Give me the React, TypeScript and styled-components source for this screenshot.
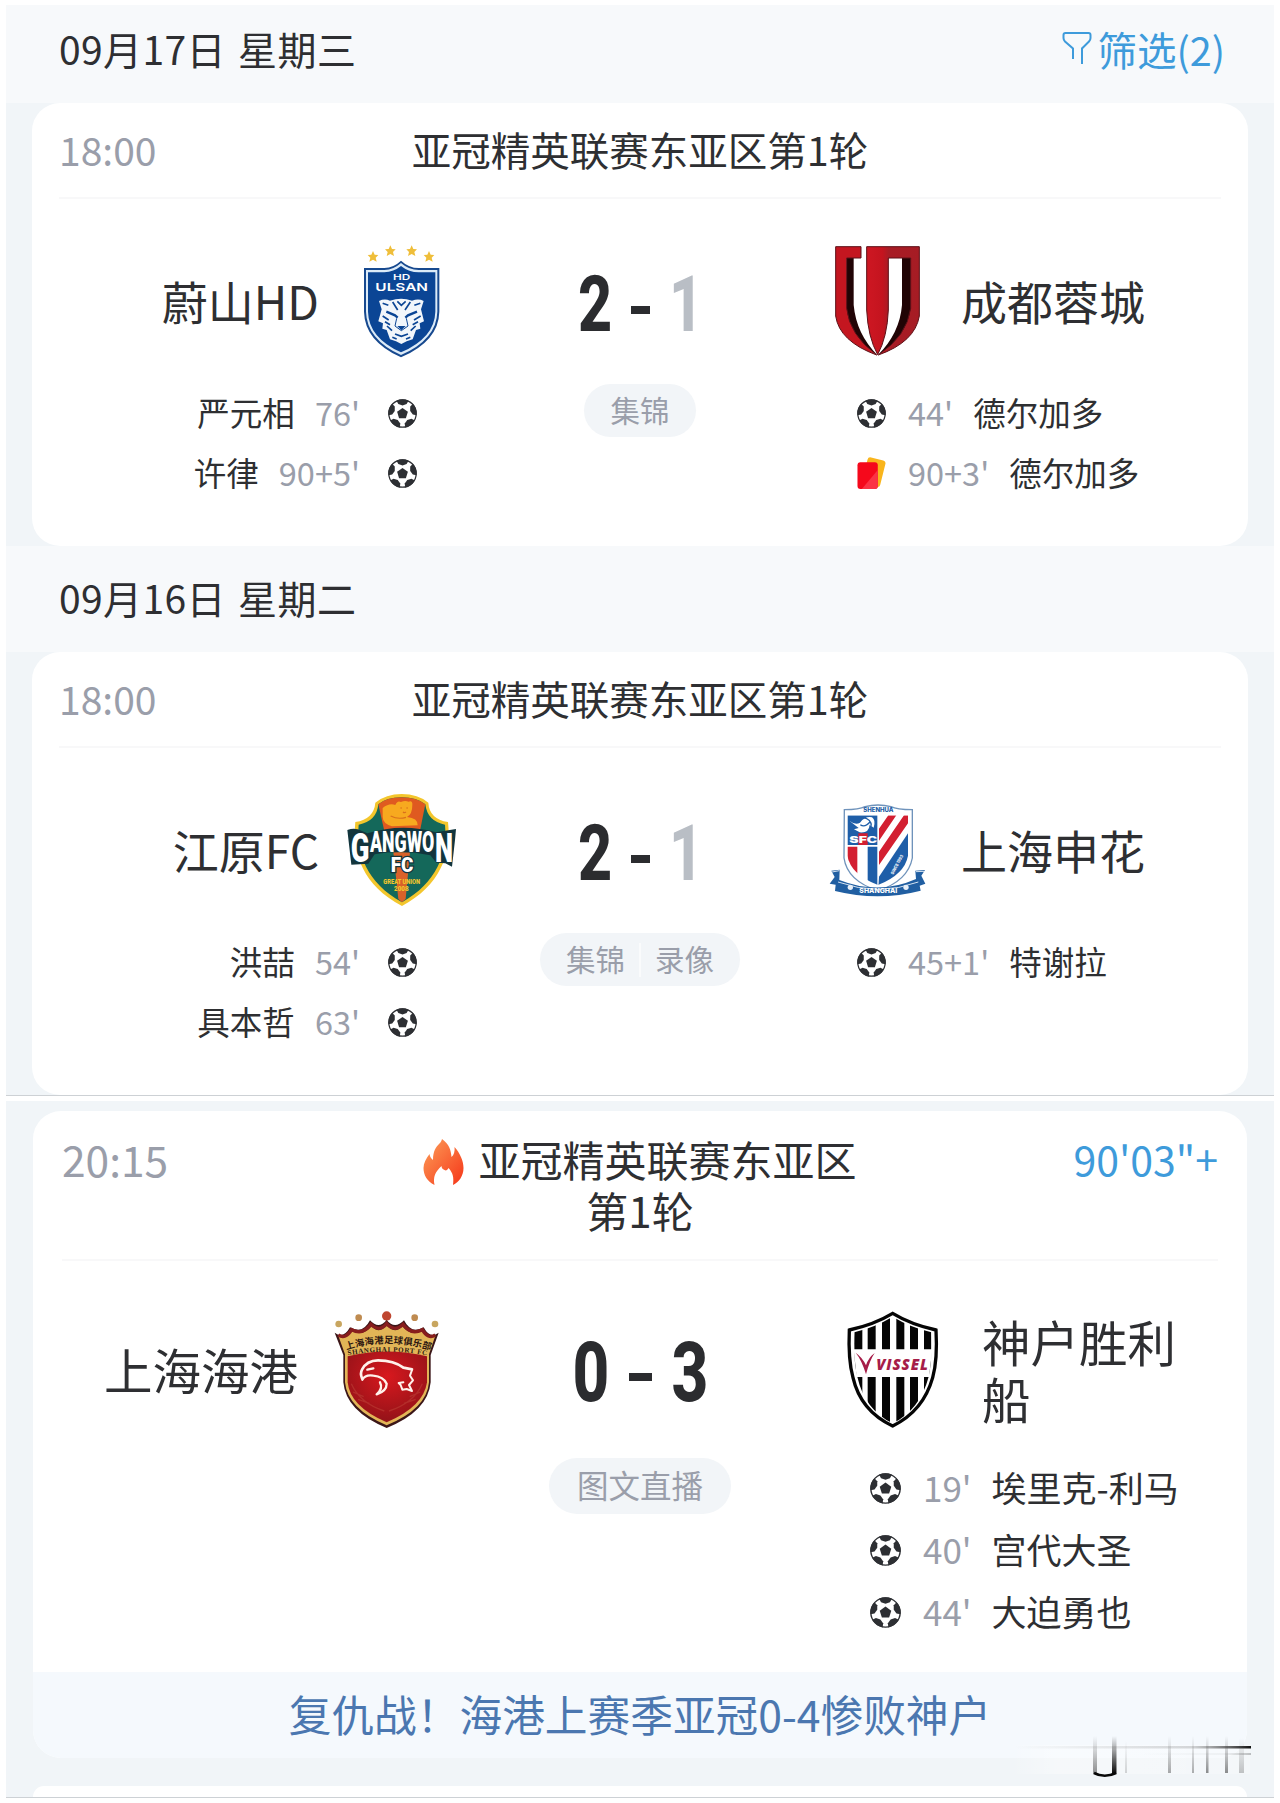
import { ReactNode } from "react";
import styled, { createGlobalStyle } from "styled-components";

const GlobalStyle = createGlobalStyle`
  * {
    box-sizing: border-box;
  }
  body {
    margin: 0;
    background: #fff;
    font-family: "Noto Sans CJK SC", sans-serif;
    color: #2e2f32;
  }
`;

type MatchEvent = { type: "goal" | "red"; time: string; player: string };

type Team = { name: string; crest: ReactNode; events: MatchEvent[] };

type Match = {
  time: string;
  title: string;
  home: Team;
  away: Team;
  score: [number, number];
  tags: string[];
};

const Ball = ({ size }: { size: number }) => (
  <svg width={size} height={size} viewBox="0 0 30 30">
    <circle cx="15" cy="15" r="14.2" fill="#fff" stroke="#2d2f33" strokeWidth="1.3" />
    {[0, 72, 144, 216, 288].map((angle) => (
      <path
        key={angle}
        transform={`rotate(${angle} 15 15)`}
        d="M8.800 1.700Q15 -1 21.200 1.700L19.300 5.200 15 6.600 10.700 5.200Z"
        fill="#2d2f33"
      />
    ))}
    <path d="M15 9.200 20.600 13.200 18.500 19.900H11.500L9.400 13.200Z" fill="#2d2f33" />
  </svg>
);

const RedCard = () => (
  <svg width="30" height="34" viewBox="0 0 30 34">
    <rect
      x="8"
      y="2"
      width="19"
      height="28"
      rx="3"
      fill="#f9b51c"
      transform="rotate(14 17 16)"
    />
    <rect x="0.5" y="6" width="21" height="27.5" rx="3" fill="#f5081b" />
    <path d="M21.5 14V30.5a3 3 0 0 1-3 3H5Z" fill="#fb3345" />
  </svg>
);

const Funnel = () => (
  <svg width="30" height="34" viewBox="0 0 30 34">
    <path
      d="M11 28V17.5L3 10.5Q1.5 9 1.5 7V4Q1.5 2 3.5 2H26.500Q28.500 2 28.500 4V7Q28.500 9 27 10.500L20 17.500V33"
      fill="none"
      stroke="#3e9bdb"
      strokeWidth="2"
    />
  </svg>
);

const Flame = () => (
  <svg width="41" height="46" viewBox="0 0 41 46">
    <defs>
      <linearGradient id="flame" x1="0" y1="0" x2="1" y2="1">
        <stop offset="0.2" stopColor="#fb8a4c" />
        <stop offset="0.9" stopColor="#f6401f" />
      </linearGradient>
    </defs>
    <path
      d="M19 0C26 5 28 11 28.500 18C31 16 32 12 31.500 8C37 14 40.500 22 40.500 29C40.500 37 36 43 30 46C31 38 30 34 25.500 29C24.500 31 23 32 21.500 31C19.500 30 18.500 29 18.500 27C12 33 10 38 11.500 46C4 42 0.500 36 0.500 29C0.500 24 3 20 6.500 15C7 18 8 19.500 10 21C10 12 13 8 16 5C18 3 18.500 2 19 0Z"
      fill="url(#flame)"
    />
  </svg>
);

const UlsanCrest = () => (
  <svg width="110" height="112" viewBox="21 48 330 336" overflow="visible">
    {[
      [99, 80],
      [151, 63],
      [215, 63],
      [267, 80],
    ].map(([x, y]) => (
      <path
        key={x}
        transform={`translate(${x} ${y})`}
        d="M0-17 5-6 16-5 8 3 11 15 0 9-11 15-8 3-16-5-5-6Z"
        fill="#efbe3a"
      />
    ))}
    <path
      d="M183 92Q207 114 236 114H298V245Q296 333 183 382Q74 333 72 245V114H133Q161 113 183 92Z"
      fill="#17498f"
    />
    <path
      d="M183 99Q207 120 236 120H292V245Q290 328 183 375Q80 328 78 245V120H133Q161 119 183 99Z"
      fill="#dcebf8"
    />
    <path
      d="M183 108Q207 127 236 127H286V245Q284 323 183 367Q86 323 84 245V127H133Q161 126 183 108Z"
      fill="#0b4595"
    />
    <text textAnchor="middle" fontFamily="Inter" fontWeight="600" fill="#fff">
      <tspan
        x="185"
        y="151"
        fontSize="24"
        textLength="52"
        lengthAdjust="spacingAndGlyphs"
      >
        HD
      </tspan>
      <tspan
        x="185"
        y="184"
        fontSize="33"
        textLength="158"
        lengthAdjust="spacingAndGlyphs"
      >
        ULSAN
      </tspan>
    </text>
    <path
      d="M117 213Q134 205 150 212Q184 200 216 212Q236 205 251 213L243 238L252 274L239 280L241 296L228 300L218 328L200 334L184 342L168 334L150 328L140 300L127 296L129 280L115 274L125 238Z"
      fill="#f2f6fb"
    />
    <g fill="none" stroke="#0b4595" strokeWidth="5">
      <path d="M128 220 145 226 M241 220 223 226 M172 214 184 226 197 214 M158 216 173 240 M211 216 195 240" />
      <path d="M139 245 165 256 173 263 M231 245 204 256 196 263" strokeWidth="7" />
      <path d="M170 265 165 288 184 302 204 288 199 265" strokeWidth="3" />
      <path d="M128 258 146 270 M242 258 222 270 M135 275 150 284 M234 275 218 284 M141 288 156 302 M227 288 212 302" />
      <path d="M165 312 184 319 204 312 M157 322 170 327 M211 322 198 327" />
    </g>
    <path d="M172 288H197L184 301Z" fill="#0b4595" />
  </svg>
);

const ChengduCrest = () => (
  <svg width="110" height="112" viewBox="39 48 330 336" overflow="visible">
    <defs>
      <linearGradient id="chengdu" x1="0" y1="0" x2="1" y2="0">
        <stop offset="0" stopColor="#ce1722" />
        <stop offset="0.3" stopColor="#c4141f" />
        <stop offset="0.42" stopColor="#a81c25" />
        <stop offset="1" stopColor="#a61c24" />
      </linearGradient>
    </defs>
    <path
      d="M110 84H131V225Q139 312 202 375Q122 325 108 245Z M276 84H303V245Q287 325 204 375Q269 310 276 225Z"
      fill="#210405"
    />
    <path
      d="M77 50H153V84H110V235Q118 315 200 375Q88 334 77 258Z"
      fill="#c41620"
      stroke="#5d1118"
      strokeWidth="3"
    />
    <path
      d="M170 50H328V258Q315 336 205 375Q291 318 302 235V84H235V240Q232 320 203 374Q174 322 170 240Z"
      fill="url(#chengdu)"
      stroke="#5d1118"
      strokeWidth="3"
    />
  </svg>
);

const GangwonCrest = () => (
  <svg width="110" height="112" viewBox="51 43 330 336" overflow="visible">
    <path
      d="M215 40Q264 40 295 66Q298 115 354 124C365 220 330 315 216 376C100 315 66 220 76 124Q132 115 136 66Q168 40 215 40Z"
      fill="#f3c62c"
    />
    <path
      d="M215 50Q260 50 286 71Q292 122 345 132C353 218 320 306 216 365C111 306 78 218 86 132Q140 122 145 71Q170 50 215 50Z"
      fill="#14685a"
    />
    <path d="M145 71Q170 50 215 50Q260 50 286 71L268 160H165Z" fill="#df5a20" />
    <path d="M190 215H240L227 355 216 365 205 355Z" fill="#d9622a" />
    <path
      d="M158 82Q178 66 196 73Q202 58 213 64Q225 58 236 63Q248 59 247 73Q247 101 231 109Q264 112 263 134L186 137Q158 128 158 108Z"
      fill="#f7a91f"
    />
    <path
      d="M211 82H216M229 82H234M219 94Q223 98 228 94M182 106Q204 117 228 110"
      fill="none"
      stroke="#d9701c"
      strokeWidth="3.500"
    />
    <path
      d="M52 148Q75 140 94 150L112 158Q216 126 318 155L378 145L375 178 366 258 346 248 319 246 301 224Q216 205 134 221L115 249L64 252Z"
      fill="#12353d"
    />
    <text fill="#fff" fontFamily="Roboto" fontWeight="900">
      <tspan
        x="62"
        y="243"
        fontSize="122"
        textLength="56"
        lengthAdjust="spacingAndGlyphs"
      >
        G
      </tspan>
      <tspan
        x="120"
        y="214"
        fontSize="90"
        textLength="193"
        lengthAdjust="spacingAndGlyphs"
      >
        ANGWO
      </tspan>
      <tspan
        x="315"
        y="243"
        fontSize="122"
        textLength="54"
        lengthAdjust="spacingAndGlyphs"
      >
        N
      </tspan>
      <tspan
        x="182"
        y="274"
        fontSize="60"
        textLength="68"
        lengthAdjust="spacingAndGlyphs"
        stroke="#12353d"
        strokeWidth="8"
        paintOrder="stroke"
      >
        FC
      </tspan>
    </text>
    <text
      fill="#f3c62c"
      fontFamily="Roboto"
      fontWeight="900"
      fontSize="21"
    >
      <tspan x="160" y="309" textLength="110" lengthAdjust="spacingAndGlyphs">
        GREAT UNION
      </tspan>
      <tspan x="192" y="332" textLength="44" lengthAdjust="spacingAndGlyphs">
        2008
      </tspan>
    </text>
  </svg>
);

const ShenhuaCrest = () => (
  <svg width="110" height="112" viewBox="39 43 330 336" overflow="visible">
    <defs>
      <clipPath id="shenhua">
        <path d="M112 104H294V225Q284 281 204 313Q122 281 112 225Z" />
      </clipPath>
    </defs>
    <path
      d="M103 87Q148 87 165 78Q204 68 243 78Q260 87 307 87V232Q294 301 204 330Q112 301 102 232Z"
      fill="#fff"
      stroke="#6f93bb"
      strokeWidth="4"
    />
    <text
      x="205"
      y="94"
      textAnchor="middle"
      fontFamily="Inter"
      fontSize="18"
      fontWeight="800"
      fill="#1a5ba5"
      textLength="91"
      lengthAdjust="spacingAndGlyphs"
    >
      SHENHUA
    </text>
    <g clipPath="url(#shenhua)">
      <path d="M112 104H202V193H112Z" fill="#1e5ea8" />
      <path
        d="M118 120Q136 134 150 126Q166 106 186 110Q198 118 191 141L179 132Q177 158 149 155L132 146 146 142Z"
        fill="#fff"
      />
      <path
        d="M161 111Q183 116 184 135M151 132Q164 142 180 124"
        fill="none"
        stroke="#1e5ea8"
        strokeWidth="4"
      />
      <path d="M145 158H173V193H145Z" fill="#d31f31" />
      <path d="M112 198H142V300H112Z" fill="#d31f31" />
      <path d="M173 198H202V320H173Z" fill="#1e5ea8" />
      <path
        d="M207 144 235 104H259L207 180Z M207 213 282 104H294V128L207 253Z"
        fill="#d31f31"
      />
      <path d="M294 158V320H205L207 288Z" fill="#1e5ea8" />
    </g>
    <text
      x="160"
      y="187"
      textAnchor="middle"
      fontFamily="Inter"
      fontSize="27"
      fontWeight="900"
      fill="#fff"
      textLength="84"
      lengthAdjust="spacingAndGlyphs"
    >
      SFC
    </text>
    <text
      transform="translate(250 282) rotate(-62)"
      fontFamily="Inter"
      fontSize="13"
      fontWeight="800"
      fill="#fff"
      textLength="64"
      lengthAdjust="spacingAndGlyphs"
    >
      SINCE 1993
    </text>
    <path
      d="M64 270 89 267 88 298Q206 345 318 295L316 270 345 268 334 285 346 309 329 315 332 330Q205 363 75 331L77 312 59 309 74 289Z"
      fill="#215fa2"
    />
    <path
      d="M66 274 88 270M318 273 342 272M84 304Q206 348 325 304"
      fill="none"
      stroke="#d4e2f0"
      strokeWidth="3"
    />
    <circle cx="121" cy="320" r="8" fill="#e7eff8" />
    <circle cx="288" cy="320" r="8" fill="#e7eff8" />
    <text
      x="205"
      y="338"
      textAnchor="middle"
      fontFamily="Inter"
      fontSize="20"
      fontWeight="800"
      fill="#fff"
      textLength="114"
      lengthAdjust="spacingAndGlyphs"
    >
      SHANGHAI
    </text>
  </svg>
);

const PortCrest = () => (
  <svg width="110" height="118" viewBox="36 48 330 354" overflow="visible">
    <defs>
      <radialGradient id="port" cx="0.5" cy="0.35" r="0.7">
        <stop offset="0" stopColor="#d8181e" />
        <stop offset="1" stopColor="#8d1218" />
      </radialGradient>
      <path id="portArcCn" d="M76 166Q200 124 332 166" />
      <path id="portArcEn" d="M78 182Q200 158 326 182" />
    </defs>
    <circle cx="56" cy="87" r="10" fill="#c8a660" />
    <circle cx="116" cy="68" r="10" fill="#bf8b50" />
    <circle cx="200" cy="63" r="14" fill="#bf4630" />
    <circle cx="284" cy="68" r="10" fill="#bf8b50" />
    <circle cx="345" cy="87" r="10" fill="#c8a660" />
    <path
      d="M44 113Q70 133 90 97Q128 119 150 76Q176 105 200 75Q224 105 252 76Q274 119 311 97Q330 133 356 113L332 180V262Q324 349 200 399Q78 349 70 262V180Z"
      fill="#3b1618"
    />
    <path
      d="M55 122Q77 136 95 106Q128 126 155 94Q178 119 200 91Q224 119 247 94Q273 126 307 106Q324 136 346 122L327 178V262Q320 342 200 391Q83 342 75 262V178Z"
      fill="#e2b557"
    />
    <path
      d="M83 184Q200 155 321 184V262Q311 335 200 382Q90 335 83 262Z"
      fill="url(#port)"
    />
    <path
      d="M55 120Q77 134 95 104Q128 122 153 88Q178 113 200 86Q224 113 249 88Q273 122 307 104Q324 134 346 120"
      fill="none"
      stroke="#871d1d"
      strokeWidth="10"
    />
    <text fill="#2c1510" fontWeight="700">
      <textPath
        href="#portArcCn"
        fontSize="28"
        textLength="256"
        startOffset="4"
      >
        上海海港足球俱乐部
      </textPath>
      <textPath
        href="#portArcEn"
        fontFamily="Liberation Serif"
        fontSize="21"
        textLength="238"
        startOffset="6"
      >
        SHANGHAI PORT FC
      </textPath>
    </text>
    <g fill="none" stroke="#b32d2a" strokeWidth="4">
      <path d="M94 266Q119 323 193 348M307 266Q282 323 207 348M99 291 131 305M114 313 148 325M301 291 269 305M287 313 252 325" />
    </g>
    <g
      fill="none"
      stroke="#fff1eb"
      strokeLinecap="round"
      strokeLinejoin="round"
    >
      <path
        d="M126 250Q120 235 126 224Q140 196 174 196Q222 196 250 218L276 223"
        strokeWidth="8"
      />
      <path
        d="M127 254Q136 238 160 242Q190 245 200 266Q200 288 170 298Q190 280 180 262M142 224 160 220"
        strokeWidth="7"
      />
      <path
        d="M276 225 270 242 279 256 267 270 276 288 260 282 247 284 242 270 236 264 250 262"
        strokeWidth="6"
      />
    </g>
  </svg>
);

const VisselCrest = () => (
  <svg width="110" height="118" viewBox="54 48 330 354" overflow="visible">
    <defs>
      <clipPath id="vissel">
        <path d="M103 112Q167 96 218 65Q269 96 334 112Q338 188 326 245Q300 344 218 385Q134 344 112 245Q99 188 103 112Z" />
      </clipPath>
    </defs>
    <path
      d="M88 105Q164 88 218 55Q272 88 348 105Q353 194 338 248Q310 348 218 393Q122 348 99 248Q84 194 88 105Z"
      fill="#fff"
      stroke="#050505"
      strokeWidth="10"
    />
    <g clipPath="url(#vissel)" fill="#050505">
      {[103, 143, 186, 229, 270, 312].map((x) => (
        <rect key={x} x={x} y="65" width={x === 312 ? 22 : 24} height="320" />
      ))}
    </g>
    <path d="M101 163H337L327 246H110Z" fill="#fff" />
    <path
      d="M107 173Q128 188 138 211Q145 188 164 174Q149 196 138 238Q125 195 107 173Z"
      fill="#a61d49"
    />
    <text
      x="246"
      y="225"
      textAnchor="middle"
      fontFamily="Open Sans"
      fontStyle="italic"
      fontSize="45"
      fontWeight="800"
      fill="#a61d49"
      textLength="155"
    >
      VISSEL
    </text>
  </svg>
);

const Watermark = () => (
  <WatermarkSvg width="246" height="48" viewBox="0 0 246 48">
    <defs>
      <linearGradient id="wmDown" x1="0" y1="0" x2="0" y2="1">
        <stop offset="0" stopColor="#444" stopOpacity="0" />
        <stop offset="1" stopColor="#333" stopOpacity="0.55" />
      </linearGradient>
      <linearGradient id="wmDark" x1="0" y1="0" x2="0" y2="1">
        <stop offset="0" stopColor="#111" stopOpacity="0" />
        <stop offset="1" stopColor="#050505" />
      </linearGradient>
      <linearGradient id="wmSide" x1="0" y1="0" x2="1" y2="0">
        <stop offset="0" stopColor="#666" stopOpacity="0" />
        <stop offset="0.75" stopColor="#666" stopOpacity="0.25" />
        <stop offset="1" stopColor="#111" />
      </linearGradient>
      <linearGradient id="wmHaze" x1="0" y1="0" x2="1" y2="0">
        <stop offset="0" stopColor="#fff" stopOpacity="0" />
        <stop offset="0.2" stopColor="#fff" stopOpacity="0.35" />
        <stop offset="1" stopColor="#fff" stopOpacity="0.2" />
      </linearGradient>
    </defs>
    <rect y="12" width="240" height="29" fill="url(#wmHaze)" />
    <rect x="5" y="13" width="236" height="2.500" fill="url(#wmSide)" />
    <rect x="130" y="20" width="111" height="2" fill="url(#wmSide)" opacity="0.25" />
    <rect x="83" y="3" width="4" height="38" fill="url(#wmDown)" />
    <rect x="102" y="3" width="4.500" height="38" fill="url(#wmDark)" />
    <path d="M84 40Q94.500 45.500 106 40" stroke="#080808" strokeWidth="2.600" fill="none" />
    <rect x="115" y="8" width="2" height="32" fill="url(#wmDown)" opacity="0.35" />
    <rect x="158" y="3" width="3" height="37" fill="url(#wmDown)" opacity="0.75" />
    <rect x="182" y="3" width="2" height="37" fill="url(#wmDown)" opacity="0.7" />
    <rect x="196" y="3" width="2.500" height="37" fill="url(#wmDown)" />
    <rect x="215" y="3" width="3" height="37" fill="url(#wmDown)" />
    <rect x="229" y="5" width="5" height="35" fill="url(#wmDown)" opacity="0.5" />
  </WatermarkSvg>
);

const ulsanMatch: Match = {
  time: "18:00",
  title: "亚冠精英联赛东亚区第1轮",
  home: {
    name: "蔚山HD",
    crest: <UlsanCrest />,
    events: [
      { type: "goal", time: "76'", player: "严元相" },
      { type: "goal", time: "90+5'", player: "许律" },
    ],
  },
  away: {
    name: "成都蓉城",
    crest: <ChengduCrest />,
    events: [
      { type: "goal", time: "44'", player: "德尔加多" },
      { type: "red", time: "90+3'", player: "德尔加多" },
    ],
  },
  score: [2, 1],
  tags: ["集锦"],
};

const gangwonMatch: Match = {
  time: "18:00",
  title: "亚冠精英联赛东亚区第1轮",
  home: {
    name: "江原FC",
    crest: <GangwonCrest />,
    events: [
      { type: "goal", time: "54'", player: "洪喆" },
      { type: "goal", time: "63'", player: "具本哲" },
    ],
  },
  away: {
    name: "上海申花",
    crest: <ShenhuaCrest />,
    events: [{ type: "goal", time: "45+1'", player: "特谢拉" }],
  },
  score: [2, 1],
  tags: ["集锦", "录像"],
};

const portMatch: Match = {
  time: "20:15",
  title: "亚冠精英联赛东亚区",
  home: { name: "上海海港", crest: <PortCrest />, events: [] },
  away: {
    name: "神户胜利船",
    crest: <VisselCrest />,
    events: [
      { type: "goal", time: "19'", player: "埃里克-利马" },
      { type: "goal", time: "40'", player: "宫代大圣" },
      { type: "goal", time: "44'", player: "大迫勇也" },
    ],
  },
  score: [0, 3],
  tags: ["图文直播"],
};

const Events = ({
  events,
  home,
  large,
}: {
  events: MatchEvent[];
  home?: boolean;
  large?: boolean;
}) => (
  <EventList $home={home} $large={large}>
    {events.map((event) => (
      <EventRow key={event.time} $home={home} $large={large}>
        <EventIcon $home={home} $large={large}>
          {event.type === "goal" ? <Ball size={large ? 31 : 29} /> : <RedCard />}
        </EventIcon>
        <EventTime>{event.time}</EventTime>
        <Player>{event.player}</Player>
      </EventRow>
    ))}
  </EventList>
);

const MatchBody = ({ match, large }: { match: Match; large?: boolean }) => {
  const [homeScore, awayScore] = match.score;

  return (
    <>
      <Versus $large={large}>
        <TeamSide $home $large={large}>
          {match.home.crest}
          <TeamName $large={large}>{match.home.name}</TeamName>
        </TeamSide>
        <Score $large={large}>
          <Digit $large={large}>{homeScore}</Digit>
          <Dash $large={large} />
          <Digit $large={large} $lost={awayScore < homeScore}>
            {awayScore}
          </Digit>
        </Score>
        <TeamSide $large={large}>
          {match.away.crest}
          <TeamName $large={large}>{match.away.name}</TeamName>
        </TeamSide>
      </Versus>
      <Details $large={large}>
        <Events events={match.home.events} home large={large} />
        <TagArea>
          <Tags $large={large}>
            {match.tags.map((tag) => (
              <Tag key={tag}>{tag}</Tag>
            ))}
          </Tags>
        </TagArea>
        <Events events={match.away.events} large={large} />
      </Details>
    </>
  );
};

const MatchCard = ({ match }: { match: Match }) => (
  <Card>
    <CardHead>
      <Time>{match.time}</Time>
      <Title>{match.title}</Title>
    </CardHead>
    <MatchBody match={match} />
  </Card>
);

const App = () => {
  return (
    <>
      <GlobalStyle />
      <Page>
        <Panel>
          <DateBar $height={98} $bottom={12}>
            <span>09月17日 星期三</span>
            <Filter>
              <Funnel />
              筛选(2)
            </Filter>
          </DateBar>
          <MatchCard match={ulsanMatch} />
          <DateBar $height={106} $bottom={5}>
            <span>09月16日 星期二</span>
          </DateBar>
          <MatchCard match={gangwonMatch} />
        </Panel>
        <LivePanel>
          <LiveCard>
            <LiveHead>
              <LiveTime>{portMatch.time}</LiveTime>
              <LiveTitle>
                <Flame />
                {portMatch.title}
                <br />
                第1轮
              </LiveTitle>
              <LiveTime $live>90'03"+</LiveTime>
            </LiveHead>
            <MatchBody match={portMatch} large />
            <Headline>复仇战！海港上赛季亚冠0-4惨败神户</Headline>
          </LiveCard>
          <NextCard />
          <Watermark />
        </LivePanel>
      </Page>
    </>
  );
};

export default App;

const Page = styled.main`
  width: 1280px;
  height: 1803px;
  padding: 5px 6px 0;
  overflow: hidden;
`;

const Panel = styled.section`
  height: 1091px;
  background: #f1f5f8;
  border-bottom: 1px solid #cdd1d5;
`;

const DateBar = styled.header<{ $height: number; $bottom: number }>`
  display: flex;
  align-items: center;
  justify-content: space-between;
  height: ${({ $height }) => $height}px;
  padding: 0 49px ${({ $bottom }) => $bottom}px 53px;
  background: #f7f9fb;
  font-size: 39px;
  & > span {
    letter-spacing: 0.4px;
    word-spacing: 3px;
  }
`;

const Filter = styled.div`
  display: flex;
  align-items: center;
  gap: 5px;
  color: #3e9bdb;
  font-size: 39.5px;
`;

const Card = styled.article`
  height: 443px;
  margin: 0 26px;
  border-radius: 28px;
  background: #fff;
`;

const CardHead = styled.div`
  display: grid;
  grid-template-columns: 1fr auto 1fr;
  align-items: center;
  height: 96px;
  margin: 0 27px;
  padding-bottom: 3px;
  border-bottom: 2px solid #f8f8f9;
`;

const Time = styled.span`
  color: #9a9eaa;
  font-size: 39px;
`;

const Title = styled.h2`
  margin: 0;
  font-size: 39.5px;
  font-weight: 400;
`;

const Versus = styled.div<{ $large?: boolean }>`
  display: flex;
  align-items: center;
  justify-content: space-between;
  height: ${({ $large }) => ($large ? 118 : 112)}px;
  margin-top: ${({ $large }) => ($large ? 50 : 47)}px;
`;

const TeamSide = styled.div<{ $home?: boolean; $large?: boolean }>`
  display: flex;
  flex-direction: ${({ $home }) => ($home ? "row-reverse" : "row")};
  align-items: center;
  gap: ${({ $large }) => ($large ? 34 : 28)}px;
  width: ${({ $large }) => ($large ? 409 : 425)}px;
  svg {
    flex-shrink: 0;
  }
`;

const TeamName = styled.div<{ $large?: boolean }>`
  max-width: 200px;
  padding-bottom: ${({ $large }) => ($large ? 1 : 5)}px;
  font-size: ${({ $large }) => ($large ? 48.5 : 46)}px;
  line-height: ${({ $large }) => ($large ? 57 : 52)}px;
`;

const Score = styled.div<{ $large?: boolean }>`
  display: flex;
  align-items: center;
  justify-content: center;
  gap: ${({ $large }) => ($large ? 19 : 18)}px;
  padding-top: ${({ $large }) => ($large ? 4 : 6)}px;
`;

const Digit = styled.span<{ $large?: boolean; $lost?: boolean }>`
  display: flex;
  justify-content: center;
  width: ${({ $large }) => ($large ? 38 : 36)}px;
  color: ${({ $lost }) => ($lost ? "#b9bec5" : "#2b2c2f")};
  font-family: Roboto, sans-serif;
  font-size: ${({ $large }) => ($large ? 83 : 77)}px;
  font-weight: 800;
  line-height: 1;
  transform: scaleX(0.77);
`;

const Dash = styled.span<{ $large?: boolean }>`
  width: ${({ $large }) => ($large ? 23 : 19)}px;
  height: 8px;
  margin-top: 9px;
  background: #2b2c2f;
`;

const Details = styled.div<{ $large?: boolean }>`
  display: flex;
  justify-content: space-between;
  height: ${({ $large }) => ($large ? 214 : 134)}px;
  margin-top: ${({ $large }) => ($large ? 29 : 26)}px;
`;

const EventList = styled.ul<{ $home?: boolean; $large?: boolean }>`
  width: ${({ $large }) => ($large ? 409 : 425)}px;
  margin: 0;
  padding: ${({ $home, $large }) =>
    $home ? "0 40px 0 0" : `0 0 0 ${$large ? 32 : 34}px`};
  list-style: none;
`;

const EventRow = styled.li<{ $home?: boolean; $large?: boolean }>`
  display: flex;
  flex-direction: ${({ $home }) => ($home ? "row-reverse" : "row")};
  align-items: center;
  gap: 20px;
  height: ${({ $large }) => ($large ? 62 : 60)}px;
  font-size: ${({ $large }) => ($large ? 35 : 32.5)}px;
  white-space: nowrap;
`;

const EventIcon = styled.span<{ $home?: boolean; $large?: boolean }>`
  display: flex;
  width: ${({ $large }) => ($large ? 31 : 29)}px;
  margin: ${({ $home }) => ($home ? "0 0 2px 8px" : "0 2px 2px 0")};
`;

const EventTime = styled.span`
  padding-bottom: 5px;
  color: #9a9eaa;
`;

const Player = styled.span`
  padding-bottom: 5px;
`;

const TagArea = styled.div`
  display: flex;
  flex: 1;
  align-items: flex-start;
  justify-content: center;
`;

const Tags = styled.div<{ $large?: boolean }>`
  display: flex;
  align-items: center;
  height: ${({ $large }) => ($large ? 56 : 53)}px;
  padding: 0 ${({ $large }) => ($large ? 14 : 12)}px;
  border-radius: 28px;
  background: #f2f5f8;
  color: #9a9eaa;
  font-size: ${({ $large }) => ($large ? 31.5 : 29.5)}px;
`;

const Tag = styled.span`
  padding: 0 14px 4px;
  line-height: 30px;
  & + & {
    border-left: 2px solid #fafbfc;
  }
`;

const LivePanel = styled.section`
  position: relative;
  height: 697px;
  margin-top: 5px;
  padding: 10px 27px 0;
  background: #f1f5f8;
  border-bottom: 1px solid #cdd1d5;
`;

const LiveCard = styled.article`
  height: 647px;
  border-radius: 28px;
  background: #fff;
  overflow: hidden;
`;

const LiveHead = styled.div`
  display: flex;
  justify-content: space-between;
  height: 150px;
  margin: 0 29px;
  padding-top: 23px;
  border-bottom: 2px solid #f8f8f9;
  line-height: 49px;
`;

const LiveTime = styled.span<{ $live?: boolean }>`
  width: 200px;
  color: ${({ $live }) => ($live ? "#3e9bdb" : "#9a9eaa")};
  font-size: ${({ $live }) => ($live ? 41 : 42.5)}px;
  text-align: ${({ $live }) => ($live ? "right" : "left")};
`;

const LiveTitle = styled.h2`
  margin: 0;
  font-size: 42px;
  font-weight: 400;
  text-align: center;
  svg {
    margin: -20px 14px 0 0;
    vertical-align: -8px;
  }
`;

const Headline = styled.p`
  height: 86px;
  margin: 0;
  background: #f5f9fd;
  color: #4b77b0;
  font-size: 42.7px;
  line-height: 82px;
  text-align: center;
`;

const NextCard = styled.article`
  height: 11px;
  margin-top: 28px;
  border-radius: 28px 28px 0 0;
  background: #fff;
`;

const WatermarkSvg = styled.svg`
  position: absolute;
  right: 18px;
  bottom: 16px;
`;
